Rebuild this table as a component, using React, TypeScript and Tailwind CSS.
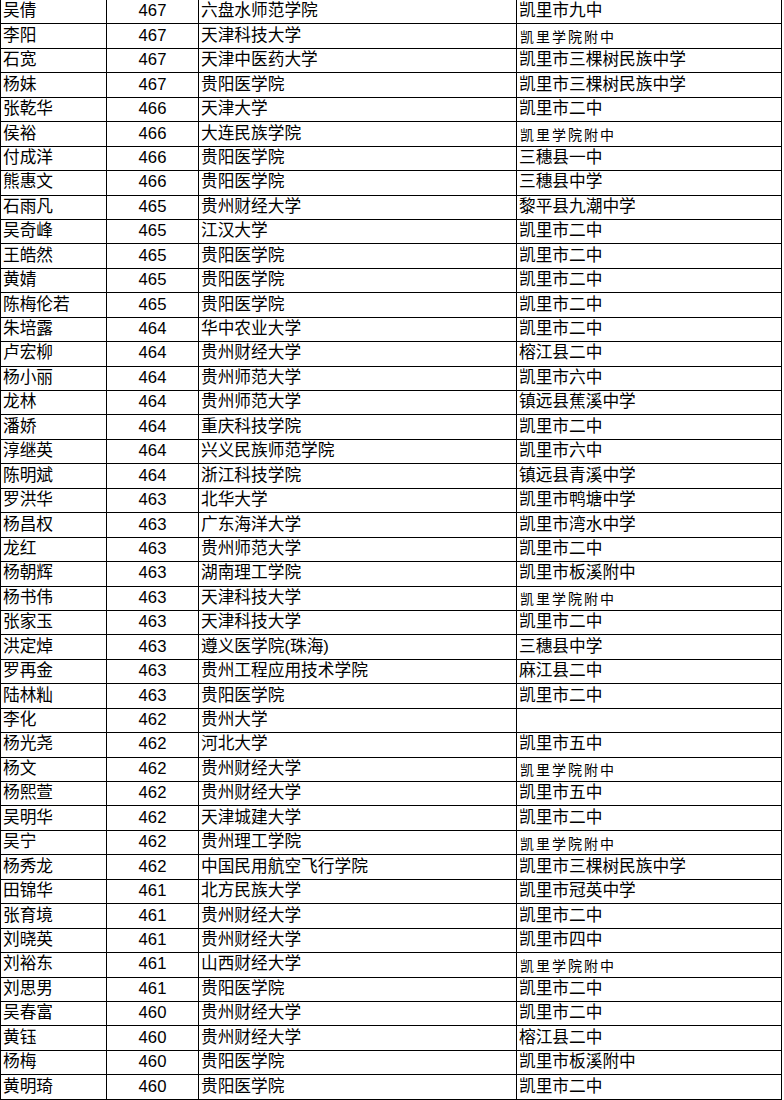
import React from "react";

type Row = [string, string, string, string];

const rows: Row[] = [
  ["吴倩", "467", "六盘水师范学院", "凯里市九中"],
  ["李阳", "467", "天津科技大学", "凯里学院附中"],
  ["石宽", "467", "天津中医药大学", "凯里市三棵树民族中学"],
  ["杨妹", "467", "贵阳医学院", "凯里市三棵树民族中学"],
  ["张乾华", "466", "天津大学", "凯里市二中"],
  ["侯裕", "466", "大连民族学院", "凯里学院附中"],
  ["付成洋", "466", "贵阳医学院", "三穗县一中"],
  ["熊惠文", "466", "贵阳医学院", "三穗县中学"],
  ["石雨凡", "465", "贵州财经大学", "黎平县九潮中学"],
  ["吴奇峰", "465", "江汉大学", "凯里市二中"],
  ["王皓然", "465", "贵阳医学院", "凯里市二中"],
  ["黄婧", "465", "贵阳医学院", "凯里市二中"],
  ["陈梅伦若", "465", "贵阳医学院", "凯里市二中"],
  ["朱培露", "464", "华中农业大学", "凯里市二中"],
  ["卢宏柳", "464", "贵州财经大学", "榕江县二中"],
  ["杨小丽", "464", "贵州师范大学", "凯里市六中"],
  ["龙林", "464", "贵州师范大学", "镇远县蕉溪中学"],
  ["潘娇", "464", "重庆科技学院", "凯里市二中"],
  ["淳继英", "464", "兴义民族师范学院", "凯里市六中"],
  ["陈明斌", "464", "浙江科技学院", "镇远县青溪中学"],
  ["罗洪华", "463", "北华大学", "凯里市鸭塘中学"],
  ["杨昌权", "463", "广东海洋大学", "凯里市湾水中学"],
  ["龙红", "463", "贵州师范大学", "凯里市二中"],
  ["杨朝辉", "463", "湖南理工学院", "凯里市板溪附中"],
  ["杨书伟", "463", "天津科技大学", "凯里学院附中"],
  ["张家玉", "463", "天津科技大学", "凯里市二中"],
  ["洪定焯", "463", "遵义医学院(珠海)", "三穗县中学"],
  ["罗再金", "463", "贵州工程应用技术学院", "麻江县二中"],
  ["陆林籼", "463", "贵阳医学院", "凯里市二中"],
  ["李化", "462", "贵州大学", ""],
  ["杨光尧", "462", "河北大学", "凯里市五中"],
  ["杨文", "462", "贵州财经大学", "凯里学院附中"],
  ["杨熙萱", "462", "贵州财经大学", "凯里市五中"],
  ["吴明华", "462", "天津城建大学", "凯里市二中"],
  ["吴宁", "462", "贵州理工学院", "凯里学院附中"],
  ["杨秀龙", "462", "中国民用航空飞行学院", "凯里市三棵树民族中学"],
  ["田锦华", "461", "北方民族大学", "凯里市冠英中学"],
  ["张育境", "461", "贵州财经大学", "凯里市二中"],
  ["刘晓英", "461", "贵州财经大学", "凯里市四中"],
  ["刘裕东", "461", "山西财经大学", "凯里学院附中"],
  ["刘思男", "461", "贵阳医学院", "凯里市二中"],
  ["吴春富", "460", "贵州财经大学", "凯里市二中"],
  ["黄钰", "460", "贵州财经大学", "榕江县二中"],
  ["杨梅", "460", "贵阳医学院", "凯里市板溪附中"],
  ["黄明琦", "460", "贵阳医学院", "凯里市二中"],
];

export default function App() {
  return (
    <div
      className="w-[784px] h-[1100px] overflow-hidden bg-white text-black"
      style={{ fontFamily: '"Liberation Sans", "Noto Sans CJK SC", sans-serif' }}
    >
      <div className="w-[782px] border-l border-black">
        {rows.map((r, i) => {
          const small = r[3] === "凯里学院附中";
          return (
            <div key={i} className="flex h-[24.44px] border-b border-black">
              <div className="w-[106px] border-r border-black flex items-center pl-[2px] text-[16.7px] leading-none whitespace-nowrap">
                {r[0]}
              </div>
              <div className="w-[92px] border-r border-black flex items-center justify-center text-[16.7px] leading-none">
                {r[1]}
              </div>
              <div className="w-[318px] border-r border-black flex items-center pl-[2px] text-[16.7px] leading-none whitespace-nowrap">
                {r[2]}
              </div>
              <div
                className={
                  small
                    ? "w-[265px] border-r border-black flex items-center pl-[3px] text-[14px] tracking-[2px] leading-none whitespace-nowrap pt-[2px]"
                    : "w-[265px] border-r border-black flex items-center pl-[2px] text-[16.7px] leading-none whitespace-nowrap"
                }
              >
                {r[3]}
              </div>
            </div>
          );
        })}
      </div>
    </div>
  );
}
